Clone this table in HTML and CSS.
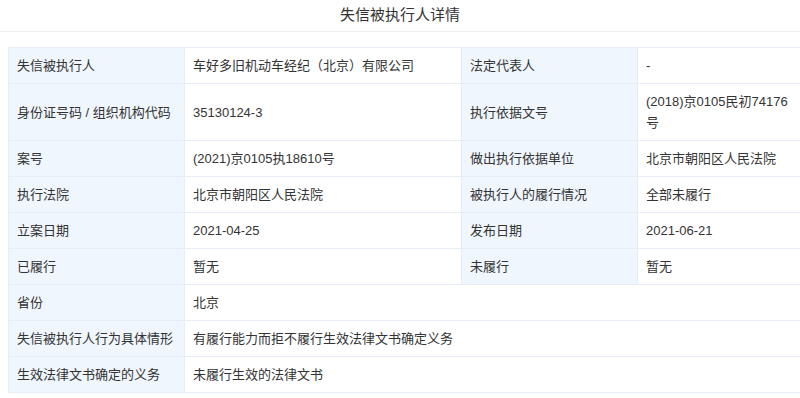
FILE: index.html
```html
<!DOCTYPE html>
<html lang="zh-CN">
<head>
<meta charset="utf-8">
<title>失信被执行人详情</title>
<link rel="stylesheet" href="styles.css">
</head>
<body>
<div class="page">
  <div class="header">失信被执行人详情</div>
  <div class="content">
    <table class="detail">
      <colgroup>
        <col class="c1"><col class="c2"><col class="c3"><col class="c4">
      </colgroup>
      <tbody>
        <tr><th>失信被执行人</th><td>车好多旧机动车经纪（北京）有限公司</td><th>法定代表人</th><td>-</td></tr>
        <tr><th>身份证号码 / 组织机构代码</th><td>35130124-3</td><th>执行依据文号</th><td>(2018)京0105民初74176号</td></tr>
        <tr><th>案号</th><td>(2021)京0105执18610号</td><th>做出执行依据单位</th><td>北京市朝阳区人民法院</td></tr>
        <tr><th>执行法院</th><td>北京市朝阳区人民法院</td><th>被执行人的履行情况</th><td>全部未履行</td></tr>
        <tr><th>立案日期</th><td>2021-04-25</td><th>发布日期</th><td>2021-06-21</td></tr>
        <tr><th>已履行</th><td>暂无</td><th>未履行</th><td>暂无</td></tr>
        <tr><th>省份</th><td colspan="3">北京</td></tr>
        <tr><th>失信被执行人行为具体情形</th><td colspan="3">有履行能力而拒不履行生效法律文书确定义务</td></tr>
        <tr><th>生效法律文书确定的义务</th><td colspan="3">未履行生效的法律文书</td></tr>
      </tbody>
    </table>
  </div>
</div>
</body>
</html>
```

FILE: styles.css
```css
html, body {
  margin: 0;
  padding: 0;
  background: #ffffff;
  overflow: hidden;
}
body {
  font-family: "Liberation Sans", "Noto Sans CJK SC", sans-serif;
  color: #333333;
  font-size: 13px;
}
.page {
  width: 800px;
}
.header {
  height: 31px;
  line-height: 29px;
  text-align: center;
  font-size: 15px;
  color: #333333;
  border-bottom: 1px solid #eeeeee;
}
.content {
  padding: 15px 0 0 8px;
}
.detail {
  width: 793px;
  border-collapse: collapse;
  table-layout: fixed;
}
.detail .c1 { width: 176px; }
.detail .c2 { width: 277px; }
.detail .c3 { width: 176px; }
.detail .c4 { width: 164px; }
.detail th,
.detail td {
  border: 1px solid #e6edf5;
  padding: 7px 8px;
  line-height: 21px;
  text-align: left;
  vertical-align: middle;
  font-weight: normal;
  color: #333333;
  word-break: break-all;
}
.detail th {
  background: #f0f6fd;
}
.detail td {
  background: #ffffff;
}
```
